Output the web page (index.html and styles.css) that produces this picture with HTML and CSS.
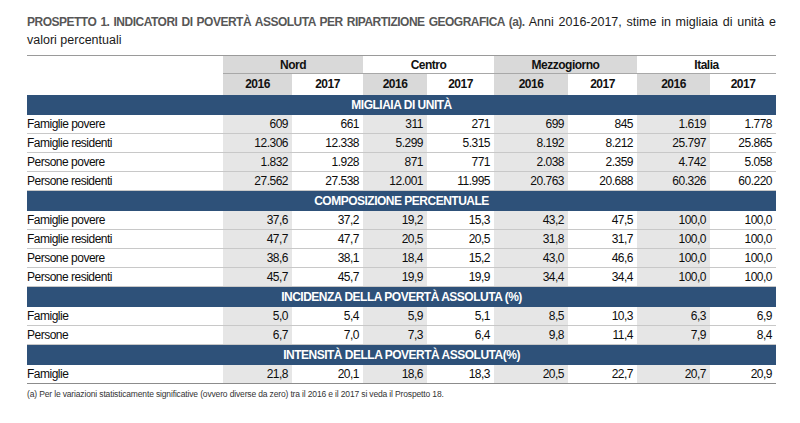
FILE: index.html
```html
<!DOCTYPE html>
<html lang="it">
<head>
<meta charset="utf-8">
<title>Prospetto 1</title>
<link rel="stylesheet" href="styles.css">
</head>
<body>
<div class="page">
  <p class="title"><span class="lead">PROSPETTO 1. INDICATORI DI POVERTÀ ASSOLUTA PER RIPARTIZIONE GEOGRAFICA (a).</span> <span class="sub">Anni 2016-2017, stime in migliaia di unità e</span> <span class="sub">valori percentuali</span></p>
  <table class="tab">
    <colgroup>
      <col class="w-lab"><col class="w1"><col class="w2"><col class="w3"><col class="w4"><col class="w5"><col class="w6"><col class="w7"><col class="w8">
    </colgroup>
    <thead>
      <tr class="h1">
        <th class="blank"></th>
        <th colspan="2" class="grp g">Nord</th>
        <th colspan="2" class="grp">Centro</th>
        <th colspan="2" class="grp g">Mezzogiorno</th>
        <th colspan="2" class="grp">Italia</th>
      </tr>
      <tr class="h2">
        <th class="blank"></th>
        <th class="g">2016</th><th>2017</th>
        <th class="g">2016</th><th>2017</th>
        <th class="g">2016</th><th>2017</th>
        <th class="g">2016</th><th>2017</th>
      </tr>
    </thead>
    <tbody>
      <tr class="band"><td colspan="9">MIGLIAIA DI UNITÀ</td></tr>
      <tr><td class="lab">Famiglie povere</td><td class="g">609</td><td>661</td><td class="g">311</td><td>271</td><td class="g">699</td><td>845</td><td class="g">1.619</td><td>1.778</td></tr>
      <tr><td class="lab">Famiglie residenti</td><td class="g">12.306</td><td>12.338</td><td class="g">5.299</td><td>5.315</td><td class="g">8.192</td><td>8.212</td><td class="g">25.797</td><td>25.865</td></tr>
      <tr><td class="lab">Persone povere</td><td class="g">1.832</td><td>1.928</td><td class="g">871</td><td>771</td><td class="g">2.038</td><td>2.359</td><td class="g">4.742</td><td>5.058</td></tr>
      <tr><td class="lab">Persone residenti</td><td class="g">27.562</td><td>27.538</td><td class="g">12.001</td><td>11.995</td><td class="g">20.763</td><td>20.688</td><td class="g">60.326</td><td>60.220</td></tr>
      <tr class="band"><td colspan="9">COMPOSIZIONE PERCENTUALE</td></tr>
      <tr><td class="lab">Famiglie povere</td><td class="g">37,6</td><td>37,2</td><td class="g">19,2</td><td>15,3</td><td class="g">43,2</td><td>47,5</td><td class="g">100,0</td><td>100,0</td></tr>
      <tr><td class="lab">Famiglie residenti</td><td class="g">47,7</td><td>47,7</td><td class="g">20,5</td><td>20,5</td><td class="g">31,8</td><td>31,7</td><td class="g">100,0</td><td>100,0</td></tr>
      <tr><td class="lab">Persone povere</td><td class="g">38,6</td><td>38,1</td><td class="g">18,4</td><td>15,2</td><td class="g">43,0</td><td>46,6</td><td class="g">100,0</td><td>100,0</td></tr>
      <tr><td class="lab">Persone residenti</td><td class="g">45,7</td><td>45,7</td><td class="g">19,9</td><td>19,9</td><td class="g">34,4</td><td>34,4</td><td class="g">100,0</td><td>100,0</td></tr>
      <tr class="band"><td colspan="9">INCIDENZA DELLA POVERTÀ ASSOLUTA (%)</td></tr>
      <tr><td class="lab">Famiglie</td><td class="g">5,0</td><td>5,4</td><td class="g">5,9</td><td>5,1</td><td class="g">8,5</td><td>10,3</td><td class="g">6,3</td><td>6,9</td></tr>
      <tr><td class="lab">Persone</td><td class="g">6,7</td><td>7,0</td><td class="g">7,3</td><td>6,4</td><td class="g">9,8</td><td>11,4</td><td class="g">7,9</td><td>8,4</td></tr>
      <tr class="band"><td colspan="9">INTENSITÀ DELLA POVERTÀ ASSOLUTA(%)</td></tr>
      <tr class="last"><td class="lab">Famiglie</td><td class="g">21,8</td><td>20,1</td><td class="g">18,6</td><td>18,3</td><td class="g">20,5</td><td>22,7</td><td class="g">20,7</td><td>20,9</td></tr>
    </tbody>
  </table>
  <p class="note">(a) Per le variazioni statisticamente significative (ovvero diverse da zero) tra il 2016 e il 2017 si veda il Prospetto 18.</p>
</div>
</body>
</html>
```

FILE: styles.css
```css
* { box-sizing: border-box; }

body {
  margin: 0;
  background: #ffffff;
  font-family: "Liberation Sans", Arial, sans-serif;
  color: #111111;
}

.page {
  width: 776px;
  padding: 13px 0 0 27px;
}

.title {
  margin: 0;
  width: 749px;
  font-size: 12.5px;
  line-height: 18px;
  text-align: justify;
  color: #1a1a1a;
}

.title .lead {
  font-size: 12px;
  font-weight: bold;
  letter-spacing: -0.5px;
  color: #575757;
}

.title .sub {
  color: #1a1a1a;
}

.tab {
  margin-top: 6px;
  width: 749px;
  table-layout: fixed;
  border-collapse: collapse;
  font-size: 12px;
  letter-spacing: -0.5px;
}

.w-lab { width: 196px; }
.w1 { width: 69px; }
.w2 { width: 71px; }
.w3 { width: 64px; }
.w4 { width: 67px; }
.w5 { width: 74px; }
.w6 { width: 69px; }
.w7 { width: 73px; }
.w8 { width: 66px; }

.tab th,
.tab td {
  padding: 0 4px 0 0;
  white-space: nowrap;
  overflow: hidden;
}

.tab thead tr.h1 th {
  height: 18px;
  border-top: 1px solid #9a9a9a;
  font-weight: bold;
  text-align: center;
  padding: 0;
}

.tab thead tr.h1 th.grp {
  border-bottom: 1px solid #a8a8a8;
}

.tab thead tr.h2 th {
  height: 21px;
  font-weight: bold;
  text-align: center;
  padding: 0;
}

.tab .g { background: #d9d9d9; }
.tab tbody .g { background: #e6e6e6; }

.tab tbody td {
  height: 19px;
  text-align: right;
  border-bottom: 1px solid #c8c8c8;
  color: #0d0d0d;
}

.tab tbody td.lab {
  text-align: left;
  padding: 0;
}

.tab tbody tr.band td {
  height: 20px;
  background: #2e5179;
  color: #ffffff;
  font-weight: bold;
  text-align: center;
  padding: 0;
  border-bottom: 0;
}

.tab tbody tr.last td {
  border-bottom: 1px solid #8c8c8c;
}

.note {
  margin: 5px 0 0;
  font-size: 8.5px;
  letter-spacing: -0.15px;
  color: #333333;
}
```
